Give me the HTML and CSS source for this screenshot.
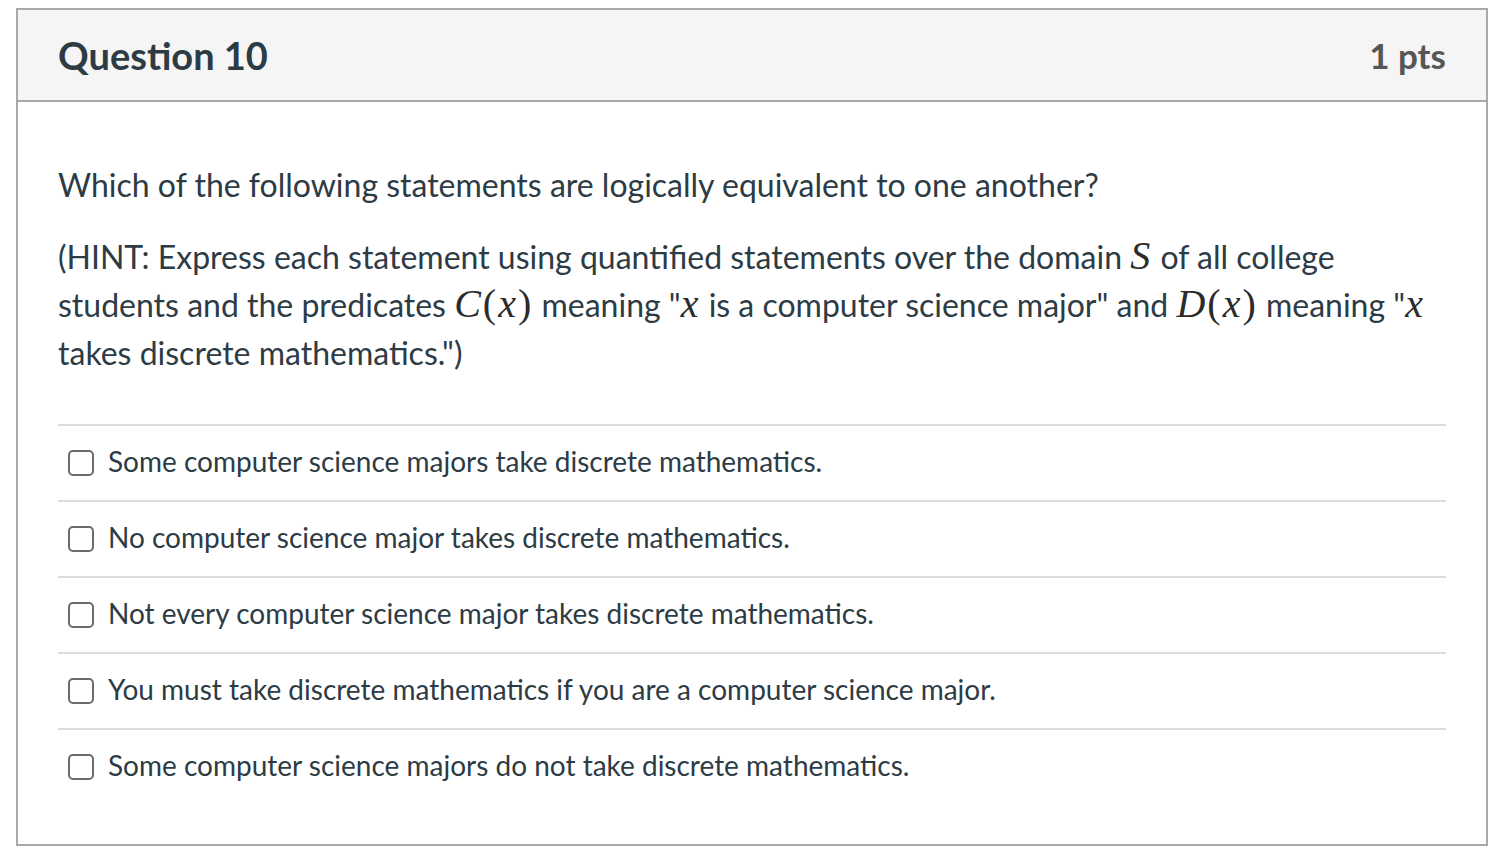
FILE: index.html
```html
<!DOCTYPE html>
<html>
<head>
<meta charset="utf-8">
<link rel="stylesheet" href="styles.css">
</head>
<body>
<div class="card">
  <div class="header">
    <h2 class="title">Question 10</h2>
    <div class="pts">1 pts</div>
  </div>
  <div class="content">
    <p class="q">Which of the following statements are logically equivalent to one another?</p>
    <p class="q">(HINT: Express each statement using quantified statements over the domain <span class="m">S</span> of all college students and the predicates <span class="m">C</span><span class="mr">(</span><span class="m">x</span><span class="mr">)</span> meaning "<span class="m">x</span> is a computer science major" and <span class="m">D</span><span class="mr">(</span><span class="m">x</span><span class="mr">)</span> meaning "<span class="m">x</span> takes discrete mathematics.")</p>
    <div class="answers">
      <label class="answer"><span class="box"></span><span class="atext">Some computer science majors take discrete mathematics.</span></label>
      <label class="answer"><span class="box"></span><span class="atext">No computer science major takes discrete mathematics.</span></label>
      <label class="answer"><span class="box"></span><span class="atext">Not every computer science major takes discrete mathematics.</span></label>
      <label class="answer"><span class="box"></span><span class="atext">You must take discrete mathematics if you are a computer science major.</span></label>
      <label class="answer"><span class="box"></span><span class="atext">Some computer science majors do not take discrete mathematics.</span></label>
    </div>
  </div>
</div>
</body>
</html>
```
FILE: styles.css
```css
html, body {
  margin: 0;
  padding: 0;
  background: #fff;
}
body {
  padding: 8px 20px 0 16px;
  font-family: Lato, "Noto Sans", sans-serif;
  color: #2d3b45;
}
.card {
  border: 2px solid #a8a8a8;
  box-sizing: border-box;
  width: 1472px;
  height: 838px;
}
.header {
  height: 90px;
  background: #f5f5f5;
  border-bottom: 2px solid #a8a8a8;
  display: flex;
  align-items: center;
  justify-content: space-between;
  padding: 0 40px;
}
.title {
  margin: 0;
  font-size: 38px;
  font-weight: 700;
  color: #2d3b45;
}
.pts {
  font-size: 35px;
  font-weight: 700;
  color: #565656;
}
.content {
  padding: 59px 40px 0 40px;
}
.q {
  margin: 0 0 24px 0;
  font-size: 32px;
  line-height: 48px;
}
.m,
.mr {
  font-family: "Liberation Serif", "DejaVu Serif", serif;
  font-size: 40px;
  line-height: 0;
  letter-spacing: 2px;
  color: #2b2b2b;
}
.m {
  font-style: italic;
}
.answers {
  margin-top: 47px;
}
.answer {
  display: flex;
  align-items: center;
  height: 74px;
  border-top: 2px solid #dcdcdc;
  padding-left: 10px;
}
.box {
  width: 26px;
  height: 26px;
  border: 2px solid #6b6b6b;
  border-radius: 5px;
  box-sizing: border-box;
  margin-right: 14px;
  flex: none;
}
.atext {
  font-size: 28px;
  margin-bottom: 4px;
}
```
